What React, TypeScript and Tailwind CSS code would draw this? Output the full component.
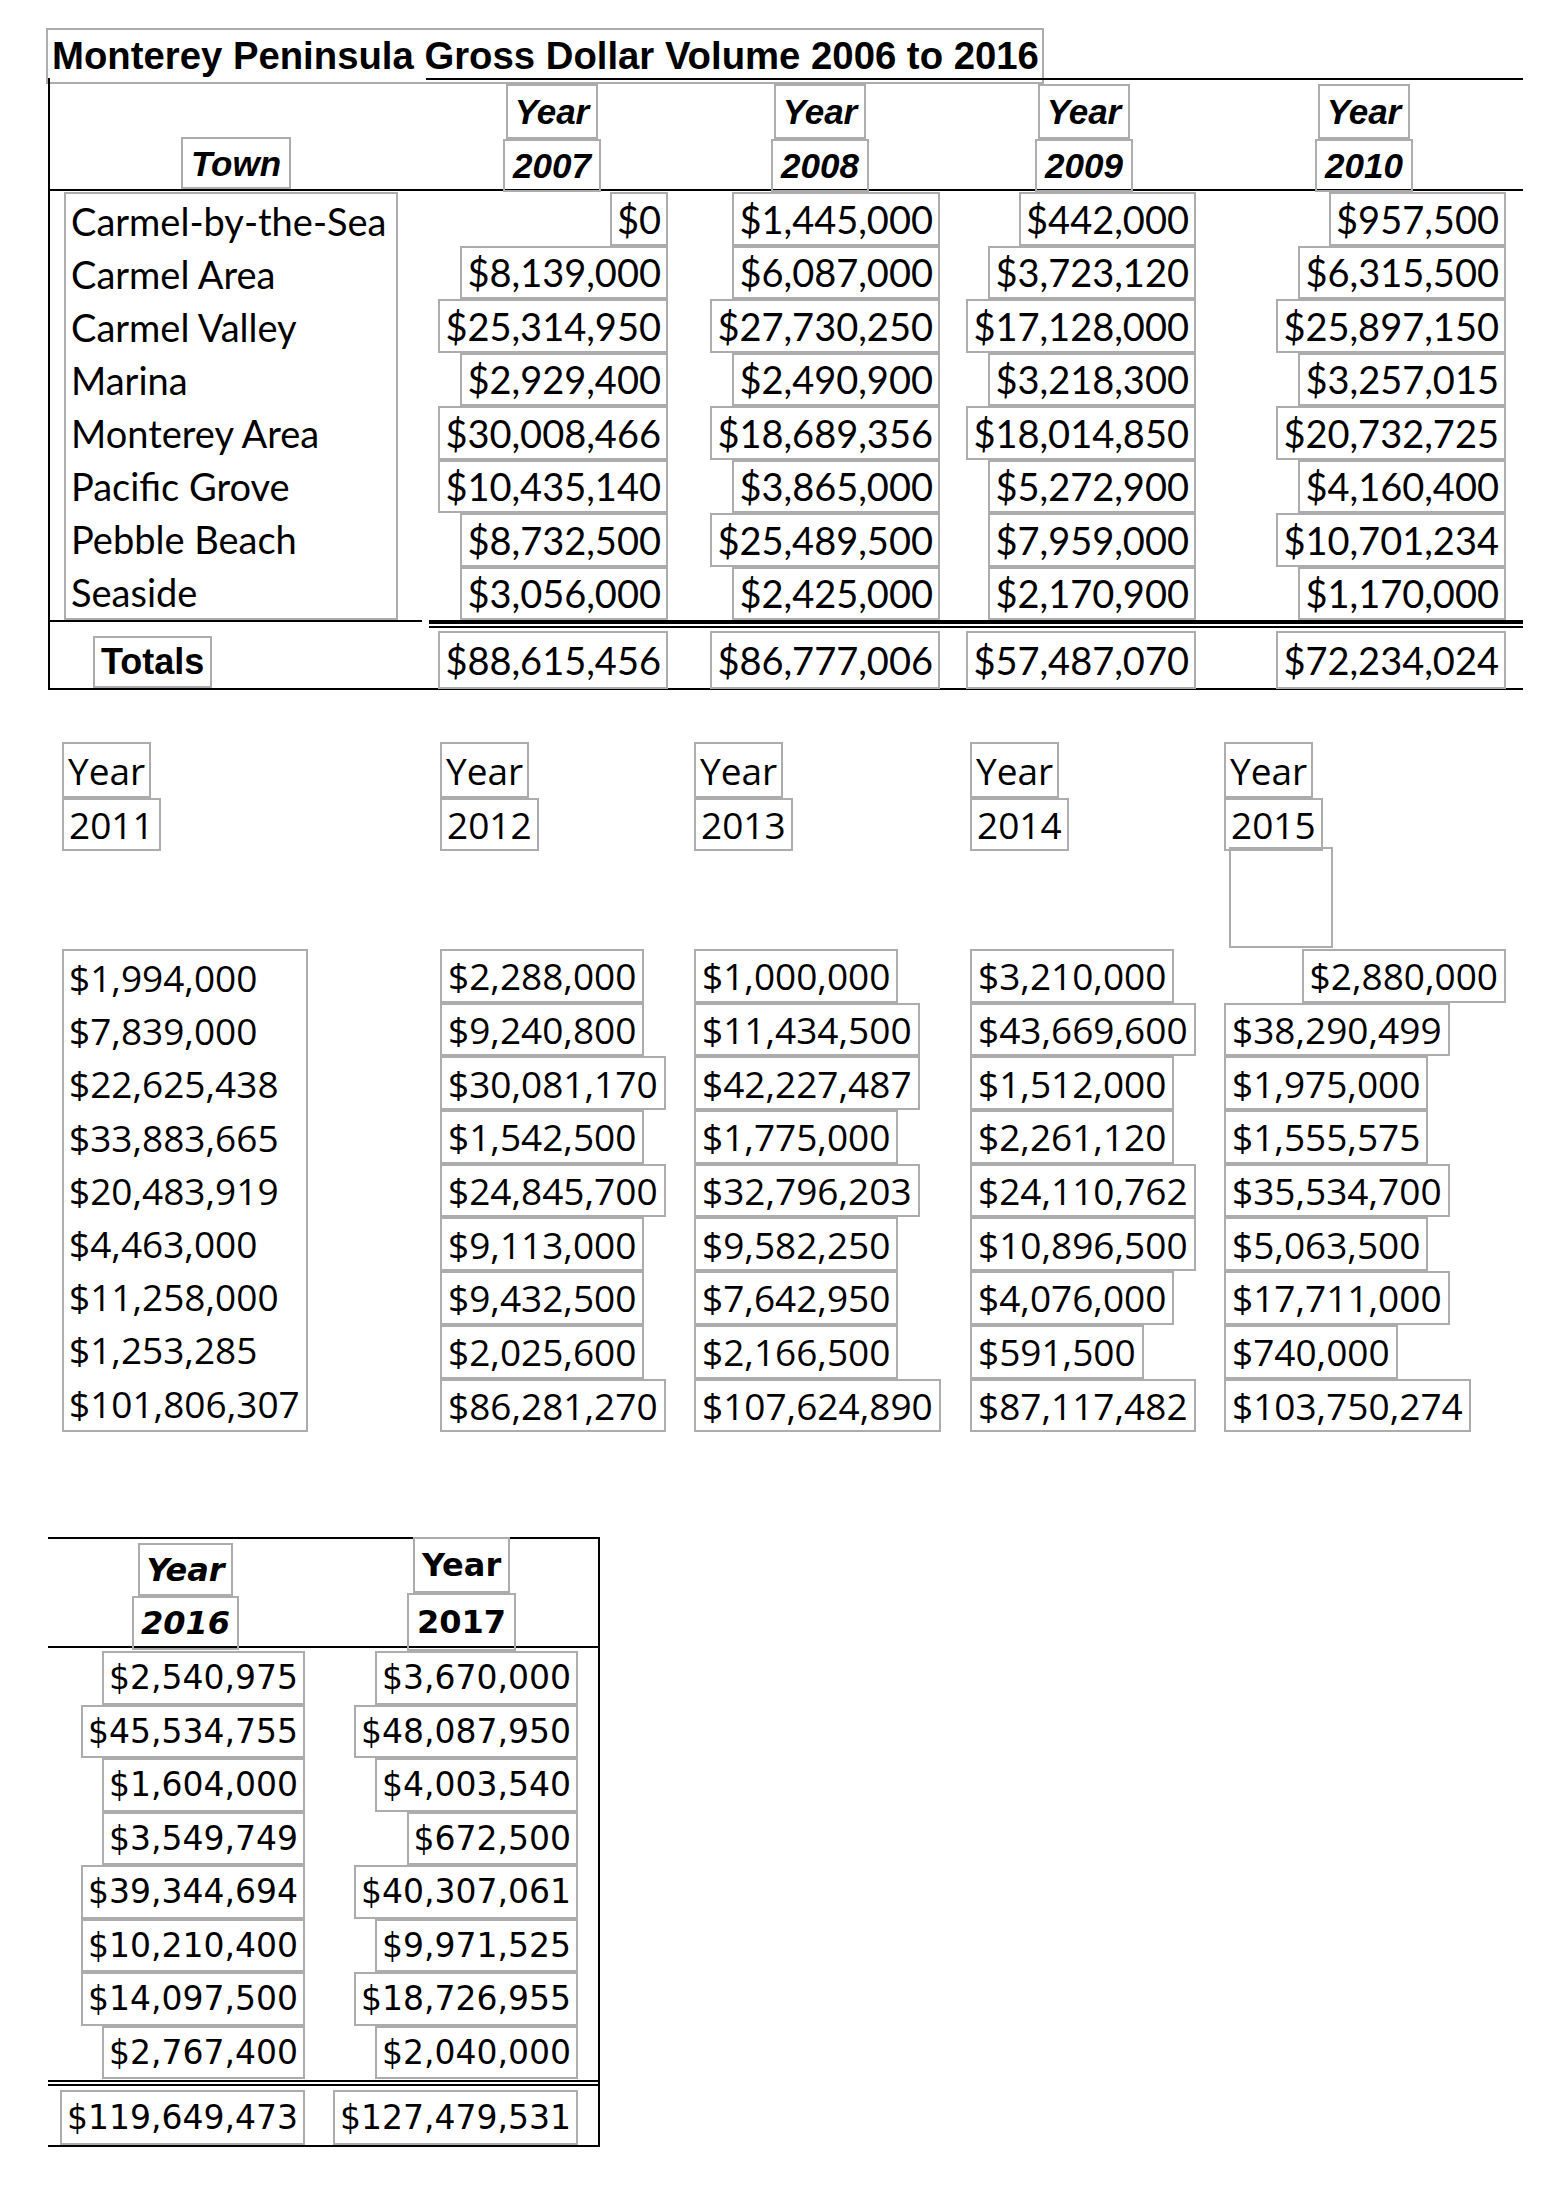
import React from "react";

// grey outline that the scanned document draws round each text run
const box = "border-2 border-[#acacac]";

const towns = [
  "Carmel-by-the-Sea",
  "Carmel Area",
  "Carmel Valley",
  "Marina",
  "Monterey Area",
  "Pacific Grove",
  "Pebble Beach",
  "Seaside",
];

const firstCols = [
  {
    year: "2007",
    width: "w-[272px]",
    pr: "pr-[6px]",
    head: "ml-[101px]",
    values: ["$0", "$8,139,000", "$25,314,950", "$2,929,400", "$30,008,466", "$10,435,140", "$8,732,500", "$3,056,000"],
    total: "$88,615,456",
  },
  {
    year: "2008",
    width: "w-[272px]",
    pr: "pr-[6px]",
    head: "ml-[97px]",
    values: ["$1,445,000", "$6,087,000", "$27,730,250", "$2,490,900", "$18,689,356", "$3,865,000", "$25,489,500", "$2,425,000"],
    total: "$86,777,006",
  },
  {
    year: "2009",
    width: "w-[256px]",
    pr: "pr-[6px]",
    head: "ml-[89px]",
    values: ["$442,000", "$3,723,120", "$17,128,000", "$3,218,300", "$18,014,850", "$5,272,900", "$7,959,000", "$2,170,900"],
    total: "$57,487,070",
  },
  {
    year: "2010",
    width: "flex-1",
    pr: "pr-[17px]",
    head: "ml-[113px]",
    values: ["$957,500", "$6,315,500", "$25,897,150", "$3,257,015", "$20,732,725", "$4,160,400", "$10,701,234", "$1,170,000"],
    total: "$72,234,024",
  },
];

const midCols = [
  {
    year: "2011",
    width: "w-[378px]",
    values: ["$1,994,000", "$7,839,000", "$22,625,438", "$33,883,665", "$20,483,919", "$4,463,000", "$11,258,000", "$1,253,285", "$101,806,307"],
  },
  {
    year: "2012",
    width: "w-[254px]",
    values: ["$2,288,000", "$9,240,800", "$30,081,170", "$1,542,500", "$24,845,700", "$9,113,000", "$9,432,500", "$2,025,600", "$86,281,270"],
  },
  {
    year: "2013",
    width: "w-[276px]",
    values: ["$1,000,000", "$11,434,500", "$42,227,487", "$1,775,000", "$32,796,203", "$9,582,250", "$7,642,950", "$2,166,500", "$107,624,890"],
  },
  {
    year: "2014",
    width: "w-[254px]",
    values: ["$3,210,000", "$43,669,600", "$1,512,000", "$2,261,120", "$24,110,762", "$10,896,500", "$4,076,000", "$591,500", "$87,117,482"],
  },
  {
    year: "2015",
    width: "w-[282px]",
    values: ["$2,880,000", "$38,290,499", "$1,975,000", "$1,555,575", "$35,534,700", "$5,063,500", "$17,711,000", "$740,000", "$103,750,274"],
  },
];

const lastCols = [
  {
    year: "2016",
    width: "w-[257px]",
    values: ["$2,540,975", "$45,534,755", "$1,604,000", "$3,549,749", "$39,344,694", "$10,210,400", "$14,097,500", "$2,767,400"],
    total: "$119,649,473",
  },
  {
    year: "2017",
    width: "w-[273px]",
    values: ["$3,670,000", "$48,087,950", "$4,003,540", "$672,500", "$40,307,061", "$9,971,525", "$18,726,955", "$2,040,000"],
    total: "$127,479,531",
  },
];

const FirstTable = () => (
  <div>
    <div
      className={`${box} ml-[46px] flex h-[56px] w-[998px] items-center pl-[4px] font-['Liberation_Sans',sans-serif] text-[38.3px] font-bold leading-none`}
    >
      Monterey Peninsula Gross Dollar Volume 2006 to 2016
    </div>

    <div className="-mt-[6px] ml-[48px] w-[1475px] border-l-2 border-black">
      <div className="ml-[376px] h-[2px] bg-black" />

      {/* header */}
      <div className="flex h-[111px] border-b-2 border-black font-['Liberation_Sans',sans-serif] text-[35px] font-bold italic leading-none">
        <div className="flex w-[352px] items-end pl-[131px]">
          <span className={`${box} flex h-[52px] items-center px-[8px]`}>Town</span>
        </div>
        {firstCols.map((c) => (
          <div key={c.year} className={`${c.width} pt-[4px]`}>
            <div className={`${c.head} inline-flex flex-col items-center`}>
              <span className={`${box} flex h-[55px] items-center px-[7px]`}>Year</span>
              <span className={`${box} flex h-[53px] items-center px-[8px]`}>{c.year}</span>
            </div>
          </div>
        ))}
      </div>

      {/* rows */}
      <div className="flex pt-[1px] font-['Lato',sans-serif] text-[38px] leading-none">
        <div className="w-[352px] pl-[14px]">
          <div className={`${box} w-[334px] pl-[5px]`}>
            {towns.map((t) => (
              <div key={t} className="flex h-[53px] items-center">
                {t}
              </div>
            ))}
          </div>
        </div>
        {firstCols.map((c) => (
          <div key={c.year} className={`${c.width} ${c.pr} flex flex-col items-end`}>
            {c.values.map((v, i) => (
              <span key={i} className={`${box} flex h-[53.5px] items-center px-[5px]`}>
                {v}
              </span>
            ))}
          </div>
        ))}
      </div>

      <div className="flex">
        <div className="w-[372px] border-t-2 border-black" />
        <div className="ml-[7px] h-[8px] flex-1 border-t-4 border-b-2 border-black" />
      </div>

      {/* totals */}
      <div className="flex h-[62px] border-b-2 border-black">
        <div className="w-[352px] pl-[43px] pt-[8px]">
          <span
            className={`${box} inline-flex h-[52px] items-center px-[6px] font-['Liberation_Sans',sans-serif] text-[36px] font-bold leading-none`}
          >
            Totals
          </span>
        </div>
        {firstCols.map((c) => (
          <div key={c.year} className={`${c.width} ${c.pr} flex items-start justify-end pt-[3px]`}>
            <span className={`${box} flex h-[58px] items-center px-[5px] font-['Lato',sans-serif] text-[38px] leading-none`}>
              {c.total}
            </span>
          </div>
        ))}
      </div>
    </div>
  </div>
);

const MiddleBlock = () => (
  <div className="mt-[52px] flex pl-[62px] font-['Open_Sans',sans-serif] text-[37px] leading-none">
    {midCols.map((c) => (
      <div key={c.year} className={`${c.width} flex flex-col`}>
        <div className="flex h-[207px] flex-col items-start">
          <span className={`${box} flex h-[56px] items-center px-[4px]`}>Year</span>
          <span className={`${box} flex h-[53px] items-center px-[5px]`}>{c.year}</span>
          {c.year === "2015" && <span className={`${box} -mt-[4px] ml-[5px] h-[101px] w-[104px]`} />}
        </div>
        {c.year === "2011" ? (
          <div className={`${box} w-[246px] pl-[5px]`}>
            {c.values.map((v, i) => (
              <div key={i} className="flex h-[53.2px] items-center">
                {v}
              </div>
            ))}
          </div>
        ) : (
          <div className="flex flex-col items-start">
            {c.values.map((v, i) => (
              <span
                key={i}
                className={`${box} flex h-[53.7px] items-center px-[6px] ${c.year === "2015" && i === 0 ? "self-end" : ""}`}
              >
                {v}
              </span>
            ))}
          </div>
        )}
      </div>
    ))}
  </div>
);

const LastTable = () => (
  <div className="mt-[105px] ml-[48px] w-[552px] border-y-2 border-r-2 border-black font-['DejaVu_Sans',sans-serif] leading-none">
    <div className="flex h-[109px] border-b-2 border-black text-[32px] font-bold">
      <div className="w-[257px] pl-[84px] pt-[4px]">
        <div className="inline-flex flex-col items-center italic">
          <span className={`${box} flex h-[53px] items-center px-[6px]`}>Year</span>
          <span className={`${box} flex h-[54px] items-center px-[7px]`}>2016</span>
        </div>
      </div>
      <div className="pl-[102px]">
        <div className="-mt-[2px] inline-flex flex-col items-center">
          <span className={`${box} flex h-[56px] items-center px-[7px]`}>Year</span>
          <span className={`${box} flex h-[58px] items-center px-[8px]`}>2017</span>
        </div>
      </div>
    </div>

    <div className="flex pb-[1px] pt-[3px] text-[33px]">
      {lastCols.map((c) => (
        <div key={c.year} className={`${c.width} flex flex-col items-end`}>
          {c.values.map((v, i) => (
            <span key={i} className={`${box} flex h-[53.5px] items-center px-[5px]`}>
              {v}
            </span>
          ))}
        </div>
      ))}
    </div>

    <div className="h-[6px] border-y-2 border-black" />

    <div className="flex h-[59px] pt-[4px] text-[33px]">
      {lastCols.map((c) => (
        <div key={c.year} className={`${c.width} flex justify-end`}>
          <span className={`${box} flex h-[55px] items-center px-[5px]`}>{c.total}</span>
        </div>
      ))}
    </div>
  </div>
);

export default function App() {
  return (
    <div className="min-h-[2194px] w-[1566px] bg-white pt-[28px] text-black">
      <FirstTable />
      <MiddleBlock />
      <LastTable />
    </div>
  );
}
